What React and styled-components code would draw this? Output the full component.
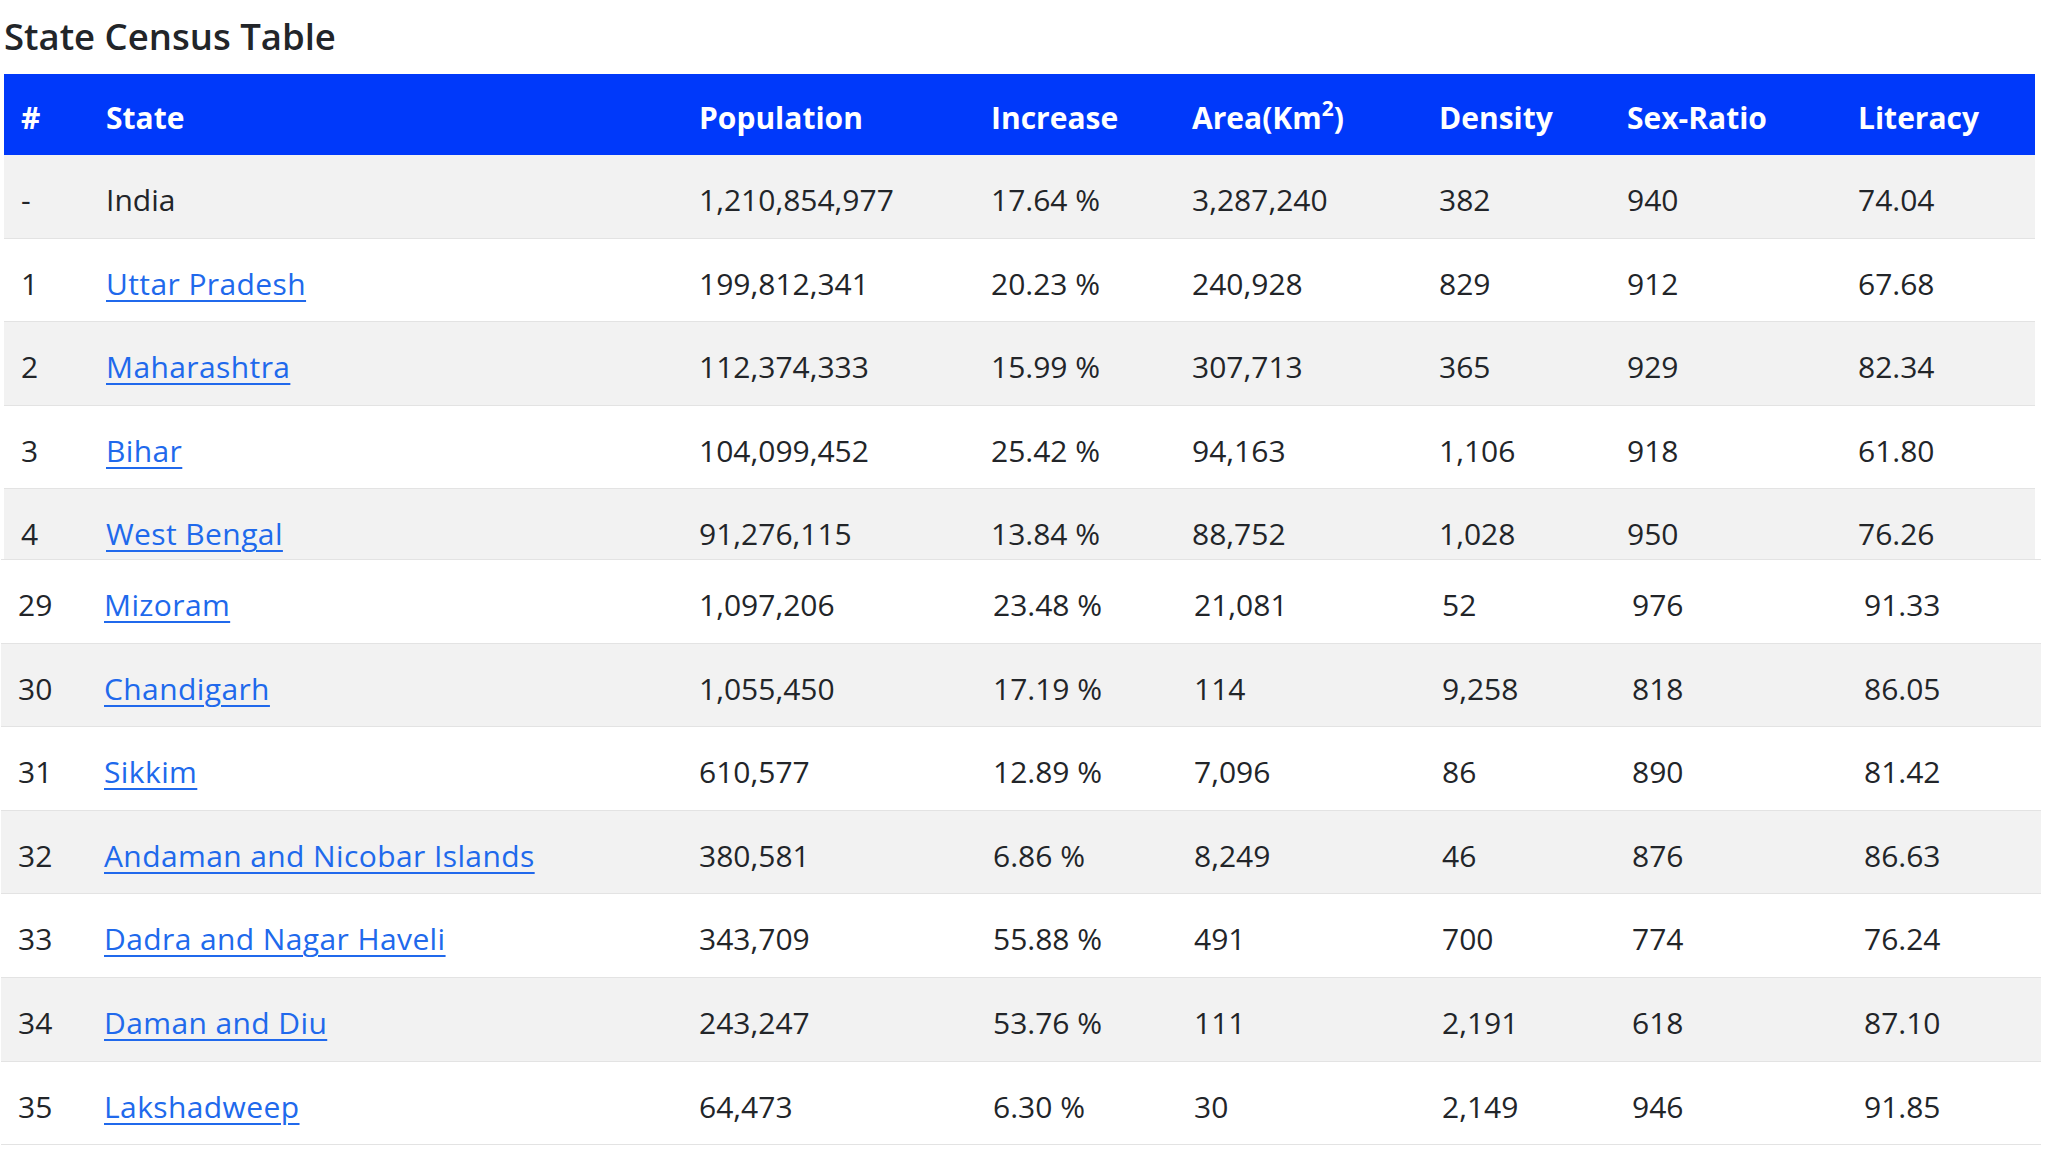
import styled, { createGlobalStyle } from "styled-components";

const GlobalStyle = createGlobalStyle`
  html, body {
    margin: 0;
    padding: 0;
    background: #ffffff;
  }
  body {
    font-family: "Open Sans", "Noto Sans", "Liberation Sans", sans-serif;
    color: #222529;
  }
`;

const Page = styled.div`
  width: 2048px;
  height: 1152px;
  overflow: hidden;
  background: #fff;
`;

const Title = styled.h5`
  margin: 0;
  padding: 11px 0 13px 4px;
  font-size: 36.5px;
  line-height: 50px;
  font-weight: 600;
  color: #222529;
`;

// the first screenshot part is cut off just under the West Bengal row
const Clip = styled.div`
  height: 485px;
  overflow: hidden;
  margin-left: ${(p) => p.$left}px;
  width: ${(p) => p.$width}px;
`;

const Part = styled.div`
  margin-left: ${(p) => p.$left}px;
  width: ${(p) => p.$width}px;
  border-top: 1px solid #e3e3e3;
`;

const Table = styled.table`
  width: 100%;
  table-layout: fixed;
  border-collapse: collapse;
  font-size: 30px;
`;

const HeadRow = styled.tr`
  background: #0039fa;
`;

const Th = styled.th`
  padding: 19px 17px 13px;
  line-height: 49px;
  text-align: left;
  font-weight: 700;
  color: #fff;
  white-space: nowrap;

  sup {
    font-size: 0.7em;
    line-height: 0;
    vertical-align: 0.62em;
  }
`;

const Row = styled.tr`
  background: ${(p) => (p.$shade ? "#f2f2f2" : "#fff")};
  border-bottom: 1px solid #e3e3e3;
`;

const Td = styled.td`
  padding: 20px 17px 12px;
  line-height: 50.6px;
  white-space: nowrap;
  color: #222529;
`;

const StateLink = styled.a`
  color: #2069ec;
  letter-spacing: 0.4px;
  text-decoration: underline;
  text-underline-offset: 5px;
  text-decoration-thickness: 2px;
`;

const topCols = [85, 593, 292, 201, 247, 188, 231, 194];
const bottomCols = [86, 595, 294, 201, 248, 190, 232, 194];

const topRows = [
  ["-", "India", "1,210,854,977", "17.64 %", "3,287,240", "382", "940", "74.04"],
  ["1", "Uttar Pradesh", "199,812,341", "20.23 %", "240,928", "829", "912", "67.68"],
  ["2", "Maharashtra", "112,374,333", "15.99 %", "307,713", "365", "929", "82.34"],
  ["3", "Bihar", "104,099,452", "25.42 %", "94,163", "1,106", "918", "61.80"],
  ["4", "West Bengal", "91,276,115", "13.84 %", "88,752", "1,028", "950", "76.26"],
];

const bottomRows = [
  ["29", "Mizoram", "1,097,206", "23.48 %", "21,081", "52", "976", "91.33"],
  ["30", "Chandigarh", "1,055,450", "17.19 %", "114", "9,258", "818", "86.05"],
  ["31", "Sikkim", "610,577", "12.89 %", "7,096", "86", "890", "81.42"],
  ["32", "Andaman and Nicobar Islands", "380,581", "6.86 %", "8,249", "46", "876", "86.63"],
  ["33", "Dadra and Nagar Haveli", "343,709", "55.88 %", "491", "700", "774", "76.24"],
  ["34", "Daman and Diu", "243,247", "53.76 %", "111", "2,191", "618", "87.10"],
  ["35", "Lakshadweep", "64,473", "6.30 %", "30", "2,149", "946", "91.85"],
];

function Cols({ widths }) {
  return (
    <colgroup>
      {widths.map((w, i) => (
        <col key={i} style={{ width: w }} />
      ))}
    </colgroup>
  );
}

function DataRow({ row, shade }) {
  const [num, state, ...rest] = row;
  return (
    <Row $shade={shade}>
      <Td>{num}</Td>
      <Td>{num === "-" ? state : <StateLink href="#">{state}</StateLink>}</Td>
      {rest.map((v, i) => (
        <Td key={i}>{v}</Td>
      ))}
    </Row>
  );
}

export default function App() {
  return (
    <Page>
      <GlobalStyle />
      <Title>State Census Table</Title>

      <Clip $left={4} $width={2031}>
        <Table>
          <Cols widths={topCols} />
          <thead>
            <HeadRow>
              <Th>#</Th>
              <Th>State</Th>
              <Th>Population</Th>
              <Th>Increase</Th>
              <Th>
                Area(Km<sup>2</sup>)
              </Th>
              <Th>Density</Th>
              <Th>Sex-Ratio</Th>
              <Th>Literacy</Th>
            </HeadRow>
          </thead>
          <tbody>
            {topRows.map((r, i) => (
              <DataRow key={r[0]} row={r} shade={i % 2 === 0} />
            ))}
          </tbody>
        </Table>
      </Clip>

      <Part $left={1} $width={2040}>
        <Table>
          <Cols widths={bottomCols} />
          <tbody>
            {bottomRows.map((r, i) => (
              <DataRow key={r[0]} row={r} shade={i % 2 === 1} />
            ))}
          </tbody>
        </Table>
      </Part>
    </Page>
  );
}
